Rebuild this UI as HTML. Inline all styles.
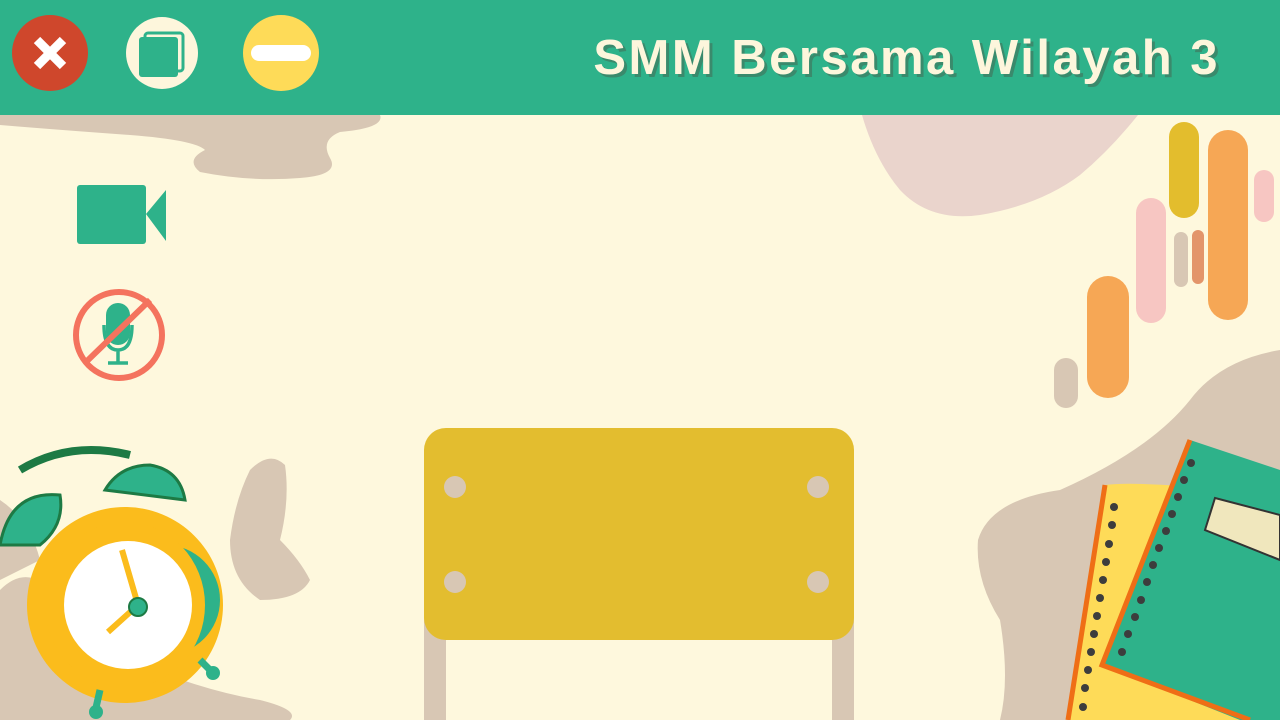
<!DOCTYPE html>
<html><head><meta charset="utf-8"><style>
html,body{margin:0;padding:0}
body{width:1280px;height:720px;overflow:hidden;background:#fef8dd;position:relative;font-family:"Liberation Sans",sans-serif}
.t{position:absolute;right:60px;top:30px;font-size:49px;font-weight:bold;color:#fdf6dc;text-shadow:3px 3px 0 #3a8a6c;letter-spacing:2.5px;white-space:nowrap}
svg{position:absolute;left:0;top:0}
</style></head><body>
<svg width="1280" height="720" viewBox="0 0 1280 720">
<path d="M0 115 L380 115 Q385 128 340 132 Q320 140 330 158 Q340 175 300 178 Q250 182 200 172 Q185 160 205 150 Q195 140 130 135 Q60 130 0 125Z" fill="#d8c7b4"/>
<path d="M862 115 L1138 115 Q1110 150 1080 175 Q1040 205 980 215 Q930 222 900 190 Q875 160 862 115Z" fill="#ead4cc"/>
<path d="M1280 350 Q1220 360 1190 400 Q1150 450 1060 490 Q990 500 978 540 Q975 580 1000 620 Q1010 680 1000 720 L1280 720Z" fill="#d8c7b4"/>
<path d="M0 590 Q30 560 60 600 Q80 640 130 660 Q200 690 260 700 Q300 710 290 720 L0 720Z" fill="#d8c7b4"/>
<path d="M250 470 Q270 450 285 465 Q290 500 280 540 Q300 560 310 580 Q300 600 260 600 Q230 580 230 540 Q235 500 250 470Z" fill="#d8c7b4"/>
<path d="M0 500 Q30 520 40 560 L0 580Z" fill="#d8c7b4"/>
<rect x="1169" y="122" width="30" height="96" rx="15" fill="#e3bd2d"/>
<rect x="1208" y="130" width="40" height="190" rx="20" fill="#f6a755"/>
<rect x="1136" y="198" width="30" height="125" rx="15" fill="#f7c6c2"/>
<rect x="1254" y="170" width="20" height="52" rx="10" fill="#f7c6c2"/>
<rect x="1174" y="232" width="14" height="55" rx="7" fill="#d8c7b4"/>
<rect x="1192" y="230" width="12" height="54" rx="6" fill="#e3956a"/>
<rect x="1087" y="276" width="42" height="122" rx="21" fill="#f6a755"/>
<rect x="1054" y="358" width="24" height="50" rx="12" fill="#d8c7b4"/>
<rect x="0" y="0" width="1280" height="115" fill="#2eb28a"/>
<circle cx="50" cy="53" r="38" fill="#cf472c"/>
<path d="M37 40 L63 66 M63 40 L37 66" stroke="#fff" stroke-width="9"/>
<circle cx="162" cy="53" r="36" fill="#fdf6dc"/>
<rect x="145" y="33" width="38" height="38" rx="3" fill="none" stroke="#2eb28a" stroke-width="3"/>
<rect x="139" y="37" width="39" height="40" rx="3" fill="#2eb28a"/>
<circle cx="281" cy="53" r="38" fill="#fedb58"/>
<rect x="251" y="45" width="60" height="16" rx="8" fill="#fff"/>
<rect x="77" y="185" width="69" height="59" rx="3" fill="#2eb28a"/>
<path d="M146 214 L166 190 L166 241Z" fill="#2eb28a"/>
<rect x="106" y="303" width="24" height="42" rx="12" fill="#2eb28a"/>
<path d="M104 325 Q104 350 118 350 Q132 350 132 325 M118 350 V362 M108 363 H128" stroke="#2eb28a" stroke-width="3.5" fill="none"/>
<circle cx="119" cy="335" r="43" fill="none" stroke="#f4735e" stroke-width="6"/>
<path d="M86 362 L150 300" stroke="#f4735e" stroke-width="6"/>
<rect x="424" y="600" width="22" height="120" fill="#d8c7b4"/>
<rect x="832" y="600" width="22" height="120" fill="#d8c7b4"/>
<rect x="424" y="428" width="430" height="212" rx="22" fill="#e3bd2f"/>
<circle cx="455" cy="487" r="11" fill="#d8c7b4"/><circle cx="818" cy="487" r="11" fill="#d8c7b4"/>
<circle cx="455" cy="582" r="11" fill="#d8c7b4"/><circle cx="818" cy="582" r="11" fill="#d8c7b4"/>
<path d="M20 470 Q70 440 130 455" stroke="#1d7a44" stroke-width="8" fill="none"/>
<path d="M0 545 Q10 490 60 495 Q65 525 40 545Z" fill="#2eb28a" stroke="#1d7a44" stroke-width="3"/>
<path d="M105 490 Q120 465 150 465 Q180 470 185 500Z" fill="#2eb28a" stroke="#1d7a44" stroke-width="3"/>
<circle cx="125" cy="605" r="98" fill="#fbbc1c"/>
<circle cx="165" cy="600" r="55" fill="#2eb28a"/>
<ellipse cx="125" cy="605" rx="80" ry="83" fill="#fbbc1c"/>
<circle cx="128" cy="605" r="64" fill="#fff"/>
<path d="M122 550 L138 605 L108 632" stroke="#fbbc1c" stroke-width="6" fill="none"/>
<circle cx="138" cy="607" r="9" fill="#2eb28a" stroke="#1d7a44" stroke-width="2"/>
<path d="M100 690 L95 712 M200 660 L212 672" stroke="#2eb28a" stroke-width="7"/>
<circle cx="96" cy="712" r="7" fill="#2eb28a"/><circle cx="213" cy="673" r="7" fill="#2eb28a"/>
<path d="M1105 485 Q1140 480 1280 495 L1280 720 L1068 720Z" fill="#fedb58"/>
<path d="M1105 485 L1068 720" stroke="#ef6e16" stroke-width="5"/>
<path d="M1190 440 L1280 470 L1280 720 L1240 720 L1102 665Z" fill="#2eb28a"/>
<path d="M1190 440 L1102 665 L1250 720" stroke="#ef6e16" stroke-width="5" fill="none"/>
<path d="M1215 498 L1280 515 L1280 560 L1205 530Z" fill="#f0e7bd" stroke="#333" stroke-width="2"/>
<g fill="#3d3d3d">
<circle cx="1114" cy="507" r="4"/><circle cx="1112" cy="525" r="4"/><circle cx="1109" cy="544" r="4"/><circle cx="1106" cy="562" r="4"/><circle cx="1103" cy="580" r="4"/><circle cx="1100" cy="598" r="4"/><circle cx="1097" cy="616" r="4"/><circle cx="1094" cy="634" r="4"/><circle cx="1091" cy="652" r="4"/><circle cx="1088" cy="670" r="4"/><circle cx="1085" cy="688" r="4"/><circle cx="1083" cy="707" r="4"/>
<circle cx="1191" cy="463" r="4"/><circle cx="1184" cy="480" r="4"/><circle cx="1178" cy="497" r="4"/><circle cx="1172" cy="514" r="4"/><circle cx="1166" cy="531" r="4"/><circle cx="1159" cy="548" r="4"/><circle cx="1153" cy="565" r="4"/><circle cx="1147" cy="582" r="4"/><circle cx="1141" cy="600" r="4"/><circle cx="1135" cy="617" r="4"/><circle cx="1128" cy="634" r="4"/><circle cx="1122" cy="652" r="4"/>
</g>
</svg>
<div class="t">SMM Bersama Wilayah 3</div>
</body></html>
